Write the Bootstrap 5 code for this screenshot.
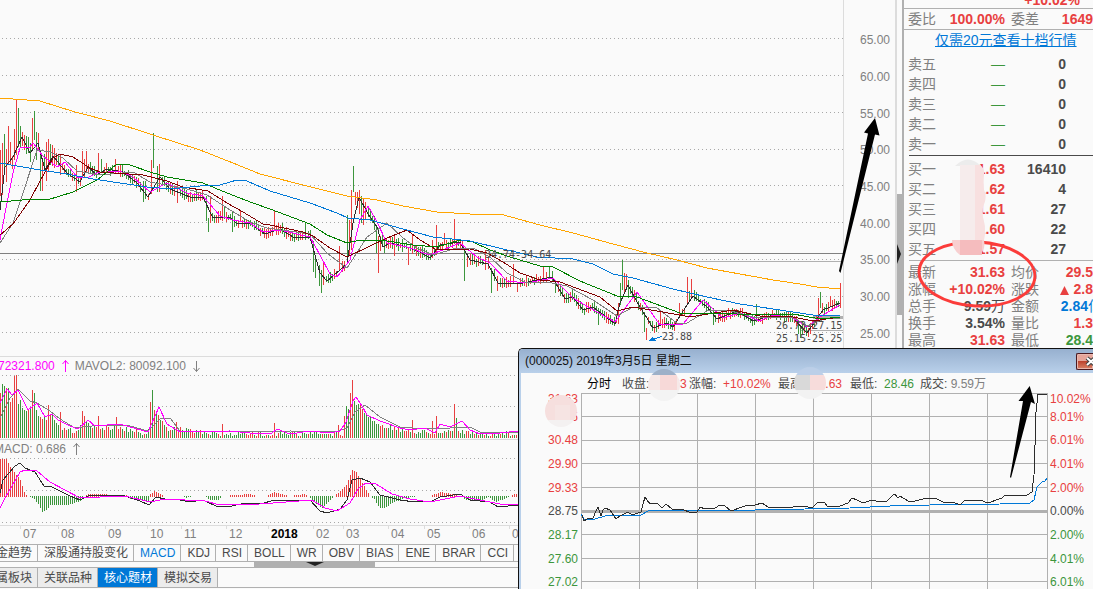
<!DOCTYPE html>
<html lang="zh-CN">
<head>
<meta charset="utf-8">
<meta name="viewport" content="width=device-width, initial-scale=1">
<title>000025 行情</title>
<link href="https://cdn.jsdelivr.net/npm/bootstrap@5.3.0/dist/css/bootstrap.min.css" rel="stylesheet">
<style>
:root{--up:#e84040;--down:#3c963c;--line:#b0b0b0;--soft:#dcdcdc;--ink:#4a4a4a;--dim:#808080;--blue:#0078d7;--pink:#f0f}
body{background:#fafafa;color:var(--dim);font:12px/16px "Liberation Sans","Noto Sans CJK SC",sans-serif;height:100vh;overflow:hidden}
svg{display:block}
.up{color:var(--up)}.down{color:var(--down)}.ink{color:var(--ink)}.dim{color:var(--dim)}.pinkish{color:var(--pink)}.bluish{color:var(--blue)}
.plot path,.plot polyline{fill:none;stroke-width:1;shape-rendering:crispEdges;vector-effect:non-scaling-stroke}
.dots{stroke:#a8a8a8;stroke-dasharray:1 3}
.s-up{stroke:var(--up)}.s-down{stroke:var(--down)}.s-orange{stroke:#ffa500}.s-blue{stroke:var(--blue)}.s-green{stroke:#008000}
.s-maroon{stroke:#800000}.s-gray{stroke:#808080}.s-pink{stroke:var(--pink)}.s-black{stroke:#2c2c2c}
.price-pane{height:357px;border-bottom:1px solid var(--soft)}
.price-pane svg{width:100%;height:356px}
.price-axis{width:53px;border-left:1px solid var(--soft);border-right:1px solid var(--soft);padding:22px 5px 4px 0}
.volume-pane{height:83px;border-bottom:1px solid var(--soft)}
.macd-pane{height:86px;border-bottom:1px solid var(--soft)}
.pane-head{height:18px;white-space:nowrap}
.volume-pane .pane-head{margin-left:-2px}
.macd-pane .pane-head{margin-left:-6px}
.mini-plot{width:100%}
.left-panes{border-right:1px solid var(--soft)}
.tag{position:absolute;font:10px/12px "DejaVu Sans Mono",monospace;color:var(--ink)}
.overlay{position:absolute;left:0;top:0;pointer-events:none}
.months{display:grid;grid-template-columns:20fr 38fr 47fr 42fr 34fr 45fr 42fr 45fr 30fr 45fr 36fr 45fr 40fr 387fr;height:18px;color:var(--dim)}
.months span{padding-left:3px;line-height:17px;position:relative;overflow:hidden}
.months span::before{content:"";position:absolute;left:0;top:0;height:3px;border-left:1px solid var(--soft)}
.strip button{background:#fafafa;border:0;border-right:1px solid var(--line);color:var(--ink);padding:0 5px 0 6px;white-space:nowrap;flex:none}
.strip .cut{margin-left:-22px}
.indicators{height:18px;border-top:1px solid var(--line);border-bottom:1px solid var(--line)}
.strip.indicators .current{color:var(--blue)}
.hbar{height:6px;border-bottom:1px solid var(--line);padding-left:254px}
.hbar i{display:block;width:121px;height:5px;background:var(--line)}
.hbar i::after{content:"";display:block;width:0;margin:0 auto;border:9px solid transparent;border-top:4px solid #222;border-bottom:0}
.themes{height:20px;border-bottom:1px solid var(--line)}
.strip.themes button{background:#ececec}
.strip.themes button.current{background:var(--blue);color:#fff}
.splitter{width:5px;padding-top:194px}
.splitter i{display:block;height:121px;background:var(--line);padding-top:50px}
.splitter i::after{content:"";display:block;width:0;border:10px solid transparent;border-left:4px solid #222;border-right:0}
.quotes{width:191px;border-left:2px solid var(--line);font-size:14px}
.q-row{display:grid;grid-template-columns:34px 63px 24px 37px 1fr;height:20px;line-height:20px;padding-left:4px;white-space:nowrap;text-align:right}
.q-row span{text-align:left}
.q-row b.vol{grid-column:3/5}
.q-stat{display:grid;grid-template-columns:32px 65px 36px 1fr;height:17px;line-height:17px;padding-left:4px;white-space:nowrap;text-align:right}
.q-stat span{text-align:left}.q-stat span+b+span{padding-left:6px}
.q-head{height:8px;line-height:16px;padding-right:13px;display:flex;align-items:flex-end;justify-content:flex-end}
.q-ratio{height:22px;line-height:20px;border-top:1px solid var(--line);border-bottom:1px solid var(--line)}
.q-link{height:24px;line-height:21px;padding-left:31px;white-space:nowrap}
.q-link a{color:var(--blue)}
.q-book{margin-bottom:1px}
.rule-dark{border-top:1px solid var(--ink);margin:1px 0 3px 5px}
.rule-soft{border-top:1px solid var(--line);margin:0 0 3px 5px}
.last{margin-right:-9px}
.win{position:absolute;right:0;top:348px;bottom:0;width:575px;max-width:100%;background:#fafafa;border:1px solid #111;border-width:1px 0 0 1px;border-top-left-radius:5px;overflow:hidden}
.win-bar{height:24px;background:linear-gradient(#97b0cf,#b9d0ea);color:#111;padding-left:6px}
.win-bar button{width:17px;height:17px;border:1px solid #4c1a20;border-right:0;border-radius:2px 0 0 2px;background:linear-gradient(#e6a59a 45%,#bd4530 50%,#d98267);padding:0;overflow:hidden;box-shadow:inset 0 0 0 1px #e9b7ae}
.win-body{border-left:2px solid #b9d0ea;position:relative}
.win-body .overlay{overflow:visible}
.win-info{height:20px;line-height:22px;padding-left:66px;white-space:nowrap}
.win-info span{flex:none}
.w1{width:35px}.w2{width:67px}.w3{width:89px}.w4{width:72px}.w5{width:70px}
.win-axis.lhs{width:60px;text-align:right;padding-right:3px}
.win-axis.rhs{width:45px;padding-left:2px}
.axis-rows{height:201px;line-height:12px;display:grid;grid-template-rows:12px repeat(8,1fr);align-items:center}
</style>
</head>
<body class="position-relative">
<div class="d-flex h-100">
  <main class="left-panes flex-fill overflow-hidden">
    <section class="price-pane d-flex position-relative">
      <div class="flex-fill"><svg class="plot" id="price" viewBox="0 0 843 356" preserveAspectRatio="none"></svg></div>
      <div class="price-axis d-flex flex-column text-end">
        <div class="flex-fill d-flex align-items-center justify-content-end">65.00</div>
        <div class="flex-fill d-flex align-items-center justify-content-end">60.00</div>
        <div class="flex-fill d-flex align-items-center justify-content-end">55.00</div>
        <div class="flex-fill d-flex align-items-center justify-content-end">50.00</div>
        <div class="flex-fill d-flex align-items-center justify-content-end">45.00</div>
        <div class="flex-fill d-flex align-items-center justify-content-end">40.00</div>
        <div class="flex-fill d-flex align-items-center justify-content-end">35.00</div>
        <div class="flex-fill d-flex align-items-center justify-content-end">30.00</div>
        <div class="flex-fill d-flex align-items-center justify-content-end">25.00</div>
      </div>
      <span class="tag" style="left:485px;top:249px">34.74-34.64</span>
      <span class="tag bluish" style="left:662px;top:331px">23.88</span>
      <span class="tag" style="left:776px;top:320px">26.73-27.15</span>
      <span class="tag" style="left:776px;top:333px">25.15-25.25</span>
    </section>
    <section class="volume-pane">
      <div class="pane-head d-flex gap-1 align-items-center"><span class="pinkish">72321.800</span>
        <svg width="12" height="14" viewBox="0 0 12 14" fill="none" stroke="#f0f"><path d="M6.500 13V1.500M3.500 5 6.500 1.500 9.500 5"/></svg>
        <span>MAVOL2: 80092.100</span>
        <svg width="12" height="14" viewBox="0 0 12 14" fill="none" stroke="#808080"><path d="M6.500 2V12.500M3.500 9 6.500 12.500 9.500 9"/></svg></div>
      <svg class="plot mini-plot" id="volume" height="64" viewBox="0 375 896 64" preserveAspectRatio="none"></svg>
    </section>
    <section class="macd-pane">
      <div class="pane-head d-flex gap-1 align-items-center"><span>MACD: 0.686</span>
        <svg width="12" height="14" viewBox="0 0 12 14" fill="none" stroke="#808080"><path d="M6.500 13V1.500M3.500 5 6.500 1.500 9.500 5"/></svg></div>
      <svg class="plot mini-plot" id="macd" height="67" viewBox="0 458 896 67" preserveAspectRatio="none"></svg>
    </section>
    <div class="months"><i></i><span>07</span><span>08</span><span>09</span><span>10</span><span>11</span><span>12</span><span class="text-black fw-bold">2018</span><span>02</span><span>03</span><span>04</span><span>05</span><span>06</span><span>07</span></div>
    <nav class="strip indicators d-flex"><button class="cut">资金趋势</button><button>深股通持股变化</button><button class="current">MACD</button><button>KDJ</button><button>RSI</button><button>BOLL</button><button>WR</button><button>OBV</button><button>BIAS</button><button>ENE</button><button>BRAR</button><button>CCI</button><button>DMI</button></nav>
    <div class="hbar"><i></i></div>
    <nav class="strip themes d-flex"><button class="cut">所属板块</button><button>关联品种</button><button class="current">核心题材</button><button>模拟交易</button></nav>
  </main>
  <div class="splitter flex-shrink-0"><i></i></div>
  <aside class="quotes flex-shrink-0 overflow-hidden position-relative">
    <div class="q-head up"><b>+10.02%</b></div>
    <div class="q-ratio q-stat"><span>委比</span><b class="up">100.00%</b><span>委差</span><b class="up">1649</b></div>
    <div class="q-link"><a href="#">仅需20元查看十档行情</a></div>
    <div id="asks"></div>
    <div class="q-book" id="book"></div>
    <div class="rule-soft"></div>
    <div>
      <div class="q-stat"><span>最新</span><b class="up">31.63</b><span>均价</span><b class="up">29.5</b></div>
      <div class="q-stat"><span>涨幅</span><b class="up">+10.02%</b><span>涨跌</span><b class="up"><svg class="d-inline" width="11" height="9" viewBox="0 0 11 9" fill="#e84040"><path d="M5.500 0 10 9H1z"/></svg> 2.8</b></div>
      <div class="q-stat"><span>总手</span><b class="ink">9.59<span class="fw-normal">万</span></b><span>金额</span><b class="bluish last">2.84<span class="fw-normal">亿</span></b></div>
      <div class="q-stat"><span>换手</span><b class="ink">3.54%</b><span>量比</span><b class="up">1.3</b></div>
      <div class="q-stat"><span>最高</span><b class="up">31.63</b><span>最低</span><b class="down">28.4</b></div>
    </div>
    <svg class="overlay" width="189" height="349" viewBox="904 0 189 349">
      <ellipse cx="977" cy="274" rx="58" ry="32" fill="none" stroke="#fb3c3a" stroke-width="3" transform="rotate(3 977 274)"/>
      <path d="M955 166Q968 153 981 166z" fill="#ececec"/>
      <path d="M960 165h20q5 4 4 10t0 15q3 7 0 14t0 18q2 7 0 18h-24z" fill="#f6ecec"/>
      <path d="M975 165h5q5 4 4 10t0 15q3 7 0 14t0 18q2 7 0 18h-9z" fill="#f8e0e0"/>
      <path d="M952 240h32q2 8-4 15h-20q-8-6-8-15z" fill="#f8cfd0"/><path d="M960 240h22v15h-22z" fill="#f5bcbe"/>
    </svg>
  </aside>
</div>

<section class="win">
  <div class="win-bar d-flex align-items-center justify-content-between"><span>(000025) 2019年3月5日 星期二</span>
    <button aria-label="关闭"><svg width="17" height="15" viewBox="0 0 17 15"><path d="M10 4l8 7M18 4l-8 7" stroke="#444" stroke-width="4"/><path d="M10 4l8 7M18 4l-8 7" stroke="#fff" stroke-width="2"/></svg></button></div>
  <div class="win-body">
    <div class="win-info d-flex"><span class="w1 text-black">分时</span><span class="w2 ink">收盘: <i class="up fst-normal ps-1">31.63</i></span><span class="w3 ink">涨幅: &nbsp;<i class="up fst-normal">+10.02%</i></span><span class="w4 ink">最高: &nbsp;<i class="up fst-normal">31.63</i></span><span class="w5 ink">最低: &nbsp;<i class="down fst-normal">28.46</i></span><span class="ink">成交: <i class="fst-normal dim">9.59万</i></span></div>
    <div class="d-flex">
      <div class="win-axis lhs up"><div class="axis-rows" id="lhs"></div></div>
      <svg class="plot flex-fill" id="intra" height="196" viewBox="581 393 467 196" preserveAspectRatio="none"></svg>
      <div class="win-axis rhs up"><div class="axis-rows" id="rhs"></div></div>
    </div>
    <svg class="overlay" width="572" height="216" viewBox="521 373 572 216">
      <defs>
        <clipPath id="disc1"><circle cx="664" cy="385" r="16"/></clipPath>
        <clipPath id="disc2"><circle cx="561" cy="411" r="16"/></clipPath>
        <clipPath id="disc3"><circle cx="810" cy="383" r="16"/></clipPath>
      </defs>
      <g clip-path="url(#disc1)"><path d="M648 369h32v6h-32z" fill="#9db0c8"/><path d="M648 375h32v15h-32z" fill="#f6e9e8"/><path d="M660 375h17v15h-17z" fill="#f7d9d8"/><path d="M648 390h32v12h-32z" fill="#f3f3f3"/></g>
      <g clip-path="url(#disc2)"><path d="M545 395h32v25h-32z" fill="#f6dfde"/><path d="M555 405h15v15h-15z" fill="#f6e4e3"/><path d="M545 420h32v8h-32z" fill="#f4f1f1"/></g>
      <g clip-path="url(#disc3)"><path d="M794 367h32v8h-32z" fill="#bccfe8"/><path d="M794 375h16v15h-16z" fill="#d9d9d9"/><path d="M810 375h16v15h-16z" fill="#f7dcdb"/><path d="M794 390h32v10h-32z" fill="#f2f2f2"/></g>
      <path d="M1029.700 386 1035 404 1031 402 1011 478 1010 477 1023 401 1018.500 401z" fill="#000"/>
    </svg>
  </div>
</section>
<svg class="overlay" width="100%" height="349"><path d="M875 118 879.500 135.500 875 134.500 840.500 273 839 271 868 133.500 864 132.500z" fill="#000"/></svg>

<script>
const pts = s => s.trim().split(/\s+/).map(p => p.split(',').map(Number));
const at = (k, x) => { for (let i = 1; i < k.length; i++) if (x <= k[i][0]) { const [a, b] = [k[i-1], k[i]]; return a[1] + (b[1]-a[1])*(x-a[0])/(b[0]-a[0]); } return k[k.length-1][1]; };
const line = (s, c) => `<polyline class="s-${c}" points="${s}"/>`;
const rule = (ys, w) => `<path class="dots" d="${ys.map(y => `M2 ${y+.5}H${w}`).join('')}"/>`;
let seed = 7; const rnd = () => (seed = (seed * 16807) % 2147483647) / 2147483647;

/* daily candles: short average, plus the notable highs and lows */
const ma5 = "0,210 5,167 13,157 22,137 30,153 38,143 45,170 53,156 67,173 80,182 88,167 97,175 107,169 123,172 137,183 148,197 160,177 170,189 190,197 203,197 213,218 230,217 237,224 250,223 265,234 280,229 293,237 310,237 320,273 327,281 347,264 353,223 359,197 368,214 377,227 383,247 390,243 407,247 420,252 430,258 440,245 460,242 470,260 488,264 498,283 523,283 547,278 552,277 565,299 573,297 583,310 593,307 615,324 620,303 628,285 637,302 653,328 667,323 673,327 687,305 693,296 707,307 717,319 737,311 753,321 773,315 793,318 807,333 823,310 840,303";
const spikes = {};
"0,150,196,r 2,143,195,r 4,134,168,g 6,149,182,r 8,126,165,r 10,142,165,r 14,129,160,r 16,100,155,r 18,108,147,g 20,126,148,g 32,118,150,r 34,111,140,g 36,132,160,g 40,152,191,g 42,160,191,r 46,142,181,r 48,139,172,r 50,144,165,g 60,154,175,r 76,165,192,r 82,151,178,r 84,159,177,r 86,151,172,r 98,153,172,r 101,159,172,g 115,159,173,r 143,181,202,g 145,181,199,g 151,160,194,r 153,133,168,g 157,166,192,g 159,164,192,r 177,181,203,r 206,196,221,g 208,218,232,g 210,196,223,r 222,196,221,r 224,207,219,g 232,212,232,g 240,210,222,r 260,228,236,r 274,211,230,r 305,222,240,g 313,241,272,g 315,255,278,g 319,265,286,g 321,270,293,g 323,262,285,r 339,246,270,r 347,215,260,g 349,220,256,r 351,190,250,r 353,166,192,g 355,192,205,r 357,192,208,r 359,190,214,r 361,196,223,g 363,198,225,r 365,202,220,r 376,226,253,g 378,236,273,r 380,236,251,r 394,236,256,r 408,248,265,r 412,234,254,r 432,240,258,r 436,225,255,r 444,233,245,r 454,219,244,r 464,248,281,g 467,254,267,r 485,250,270,r 491,268,293,g 497,276,291,r 513,264,284,r 517,282,292,r 543,267,282,r 549,266,278,g 555,280,293,g 598,308,325,g 618,303,324,r 620,283,305,g 622,260,290,g 624,273,292,r 626,274,290,r 628,280,298,g 644,312,332,g 646,328,340,r 660,312,325,r 679,303,317,r 687,277,305,r 689,291,302,g 691,279,298,r 713,308,325,g 715,315,322,g 756,304,322,g 798,320,334,g 800,325,338,g 802,322,335,g 804,325,333,r 818,298,320,r 820,292,308,g 822,303,313,r 830,296,307,r 838,301,307,g 840,283,308,r".split(' ').forEach(s => { const [x,a,b,c] = s.split(','); spikes[x] = [a,b,c]; });
const k5 = pts(ma5); let u = '', d = '';
for (let x = 0; x < 842; x++) {
  let s = spikes[x];
  if (!s && x % 2) continue;
  if (!s && (spikes[x-1] || spikes[x+1])) continue;
  if (!s) { const m = at(k5, x), big = x < 60 ? 12 : x > 345 && x < 385 ? 8 : 5, slope = at(k5, x+3) - at(k5, x-3);
    s = [m - 2 - rnd()*big, m + 2 + rnd()*big*.8, (slope > 0 ? rnd() < .72 : rnd() < .25) ? 'g' : 'r']; }
  const p = `M${x+.5} ${Math.round(s[0])}V${Math.round(s[1])}`;
  s[2] === 'r' ? u += p : d += p;
}
document.getElementById('price').innerHTML =
  rule([38,75,112,149,185,222,259,296,332], 843) +
  '<path stroke="#808080" d="M0 253.500H843"/><path stroke="#b0b0b0" d="M487 261.500H843M800 330.500H843"/><path stroke="#b0b0b0" style="stroke-width:3" d="M813 317.500H843"/>' +
  `<path class="s-up" d="${u}"/><path class="s-down" d="${d}"/>` + line(ma5, 'black') +
  line("0,240 7,203 13,173 20,148 30,147 33,143 43,156 57,167 65,162 77,177 87,178 97,173 120,171 133,177 150,192 167,183 187,193 203,196 220,216 233,220 250,223 263,232 280,230 310,237 320,255 330,274 337,277 350,260 360,220 368,206 377,222 387,243 407,247 430,255 460,243 477,257 490,263 507,281 527,283 553,278 573,298 590,308 615,322 637,292 660,325 683,324 703,300 723,318 740,313 760,321 773,315 793,318 807,327 823,315 840,305", 'pink') +
  line("0,243 13,223 23,193 37,150 50,152 63,158 77,171 100,175 133,172 150,182 187,189 207,195 227,208 250,222 267,228 310,234 327,253 347,268 367,237 387,223 403,238 417,248 433,255 457,248 473,248 490,257 507,273 527,283 547,282 567,286 593,300 617,316 633,307 657,308 677,323 687,323 707,311 727,310 753,317 793,317 807,326 827,318 840,318", 'gray') +
  line("0,235 13,224 30,200 40,181 53,158 60,154 73,157 90,168 100,172 143,175 167,181 183,187 208,191 227,203 243,212 263,224 270,225 303,232 313,236 330,248 347,257 370,246 387,238 407,230 420,240 437,250 470,249 487,253 503,262 520,273 540,280 560,282 600,297 617,311 633,307 663,312 690,317 733,310 760,316 793,317 813,321 840,317", 'maroon') +
  line("0,202 33,199 47,200 73,192 97,180 117,164 130,165 150,172 167,177 203,183 227,193 253,203 270,209 310,224 327,235 347,243 360,240 387,241 413,245 437,247 460,240 473,242 490,250 510,257 540,266 553,267 580,281 617,296 637,297 680,313 720,313 753,315 793,314 820,319 840,317", 'green') +
  line("0,163 40,170 67,174 93,179 127,184 147,187 170,189 200,186 220,185 237,180 247,181 270,191 310,203 337,213 348,218 370,220 403,229 433,237 470,241 503,249 537,257 573,259 593,264 613,274 633,278 673,289 707,297 740,304 773,309 813,315 840,315", 'blue') +
  line("0,98 40,101 75,112 110,121 153,135 200,150 233,163 260,174 307,186 347,196 377,200 403,206 437,212 470,214 500,214 540,225 573,233 613,244 647,253 677,260 707,268 740,274 773,280 800,284 817,287 840,289", 'orange') +
  '<path class="s-blue" d="M662 336.500 650 340"/><path style="fill:#0078d7" d="M648 341 656 341 652 337z"/>';

/* volume */
const env = pts("0,395 2,386 8,387 12,400 20,403 28,412 33,400 38,415 45,418 52,415 58,427 66,429 75,431 85,420 90,425 100,428 120,427 130,430 147,433 152,405 156,410 165,428 200,431 210,433 250,434 290,432 300,434 342,433 347,410 358,402 365,413 375,422 390,427 400,430 430,432 455,430 480,434 500,433 896,433");
const vs = {}; "4,386,g 8,388,g 10,402,r 14,376,r 16,375,r 20,400,g 32,390,r 34,393,g 48,405,r 60,412,r 82,411,r 84,416,r 98,416,r 116,417,r 150,402,r 152,390,g 154,410,r 176,422,r 222,424,r 274,423,r 338,425,r 344,416,r 346,406,g 350,393,r 352,380,r 354,401,g 412,420,r 432,421,r 436,416,r 454,404,r 456,418,g".split(' ').forEach(s => { const [x,y,c] = s.split(','); vs[x] = [y,c]; });
u = d = '';
for (let x = 0; x < 842; x += 2) { const [y, c] = vs[x] || [at(env, x) + (rnd()-.4)*5, rnd() < .4 ? 'r' : 'g']; const p = `M${x+.5} 438V${Math.min(436, Math.round(y))}`; c === 'r' ? u += p : d += p; }
document.getElementById('volume').innerHTML = rule([375,406], 843) + `<path class="s-up" d="${u}"/><path class="s-down" d="${d}"/>` +
  line("0,418 10,398 18,389 30,401 37,403 50,411 60,419 75,428 100,425 130,426 148,431 160,419 170,418 180,431 260,432 290,431 335,432 347,428 355,412 365,405 380,417 400,427 425,429 450,428 470,427 480,432 843,432", 'gray') +
  line("0,403 7,389 12,395 18,390 28,410 37,403 45,417 52,414 58,420 70,426 78,429 88,420 95,426 120,424 130,427 148,432 159,407 167,424 180,432 230,431 260,434 272,433 277,429 290,434 310,431 330,433 340,431 346,422 353,401 356,397 362,406 367,415 380,421 400,428 410,430 425,428 435,433 440,424 450,427 462,421 470,430 480,434 500,433 518,431 843,432", 'pink');

/* MACD */
const hist = pts("0,459 6,459 10,467 20,480 24,492 27,496 34,499 38,504 42,512 46,510 50,505 68,505 80,501 84,496 88,494 127,495 129,499 148,501 150,494 154,491 162,495 166,496 182,496 186,498 192,496 204,496 210,500 218,500 222,496 236,495 250,494 258,496 266,496 274,492 284,495 290,496 304,494 308,496 316,504 322,508 328,502 334,496 340,491 346,485 352,470 356,472 366,490 370,496 374,499 379,508 384,508 392,503 405,498 418,496 430,496 440,492 452,494 460,496 466,500 482,500 488,497 496,502 508,497 514,494 518,494");
u = d = '';
for (let x = 0; x < 518; x += 2) { const y = Math.round(at(hist, x)); if (y < 496) u += `M${x+.5} 497V${y}`; else if (y > 496) d += `M${x+.5} 496V${y}`; }
document.getElementById('macd').innerHTML = rule([458,490,522], 843) + `<path class="s-up" d="${u}"/><path class="s-down" d="${d}"/>` +
  line("0,493 3,480 8,474 15,466 20,463 25,468 35,472 44,486 50,486 60,491 70,496 80,500 88,496 110,495 125,496 140,501 149,505 156,497 165,499 180,500 190,502 203,500 218,507 232,506 245,503 260,504 275,500 310,500 320,511 327,513 340,509 347,500 352,480 360,478 370,482 380,495 400,500 415,502 432,501 440,497 460,494 470,500 490,502 498,507 518,505", 'black') +
  line("0,508 5,498 12,486 20,472 25,470 37,471 50,482 65,490 80,498 100,497 125,496 150,502 165,499 205,501 220,505 260,504 312,500 325,508 337,511 350,503 358,489 366,483 376,484 392,494 410,499 430,502 460,496 480,500 500,504 518,505", 'pink');

/* intraday window */
document.getElementById('intra').innerHTML =
  `<path stroke="#b0b0b0" d="${[393,416,440,463,487,534,558,581].map(y => `M581 ${y+.5}H1048`).join('')}${[581,639,697,755,813,871,929,987,1047].map(x => `M${x+.5} 393V589`).join('')}"/>` +
  '<path stroke="#b0b0b0" style="stroke-width:3" d="M581 511.500H1048"/>' +
  line("581,514 584,519 595,519 605,516 641,515 650,510 755,510 805,509 850,508 890,506 930,505 1000,504 1030,503 1034,500 1037,487 1042,482 1045,481 1047,478", 'blue') +
  line("582,515 584,521 587,519 593,518 596,511 598,507 601,516 603,510 605,508 610,510 616,519 620,516 628,512 632,515 641,512 643,504 645,497 647,500 650,504 657,503 662,508 666,504 672,509 682,509 691,513 697,512 700,507 705,509 715,508 720,505 725,506 731,511 745,506 755,505 762,503 768,507 782,508 805,506 808,507 812,508 818,502 824,502 828,507 840,506 848,503 852,498 857,500 863,503 872,500 880,502 887,501 893,495 895,494 898,498 900,496 908,501 915,501 927,498 935,498 943,502 953,502 960,505 965,500 980,500 988,503 1002,498 1005,495 1008,496 1027,495 1032,492 1034,475 1035,445 1036,412 1038,394 1047,394", 'black');
const scale = (id, list) => document.getElementById(id).innerHTML = list.map((t, i) => `<span class="${i > 5 ? 'down' : i === 5 ? 'ink' : ''}">${t}</span>`).join('');
scale('lhs', ['31.63','31.05','30.48','29.90','29.33','28.75','28.17','27.60','27.02']);
scale('rhs', ['10.02%','8.01%','6.01%','4.01%','2.00%','0.00%','2.00%','4.01%','6.01%']);

/* order book */
const row = (n, p, v, c) => `<div class="q-row"><span>${n}</span><b class="${c}">${p}</b><b class="vol ink">${v}</b></div>`;
document.getElementById('asks').innerHTML = ['五','四','三','二','一'].map(n => row('卖'+n, '—', 0, 'down fw-normal')).join('');
document.getElementById('book').innerHTML = '<div class="rule-dark"></div>' + [['一',63,16410],['二',62,4],['三',61,27],['四',60,22],['五',57,27]].map(([n,p,v]) => row('买'+n, '31.'+p, v, 'up')).join('');
</script>
<script src="https://cdn.jsdelivr.net/npm/bootstrap@5.3.0/dist/js/bootstrap.bundle.min.js"></script>
</body>
</html>
